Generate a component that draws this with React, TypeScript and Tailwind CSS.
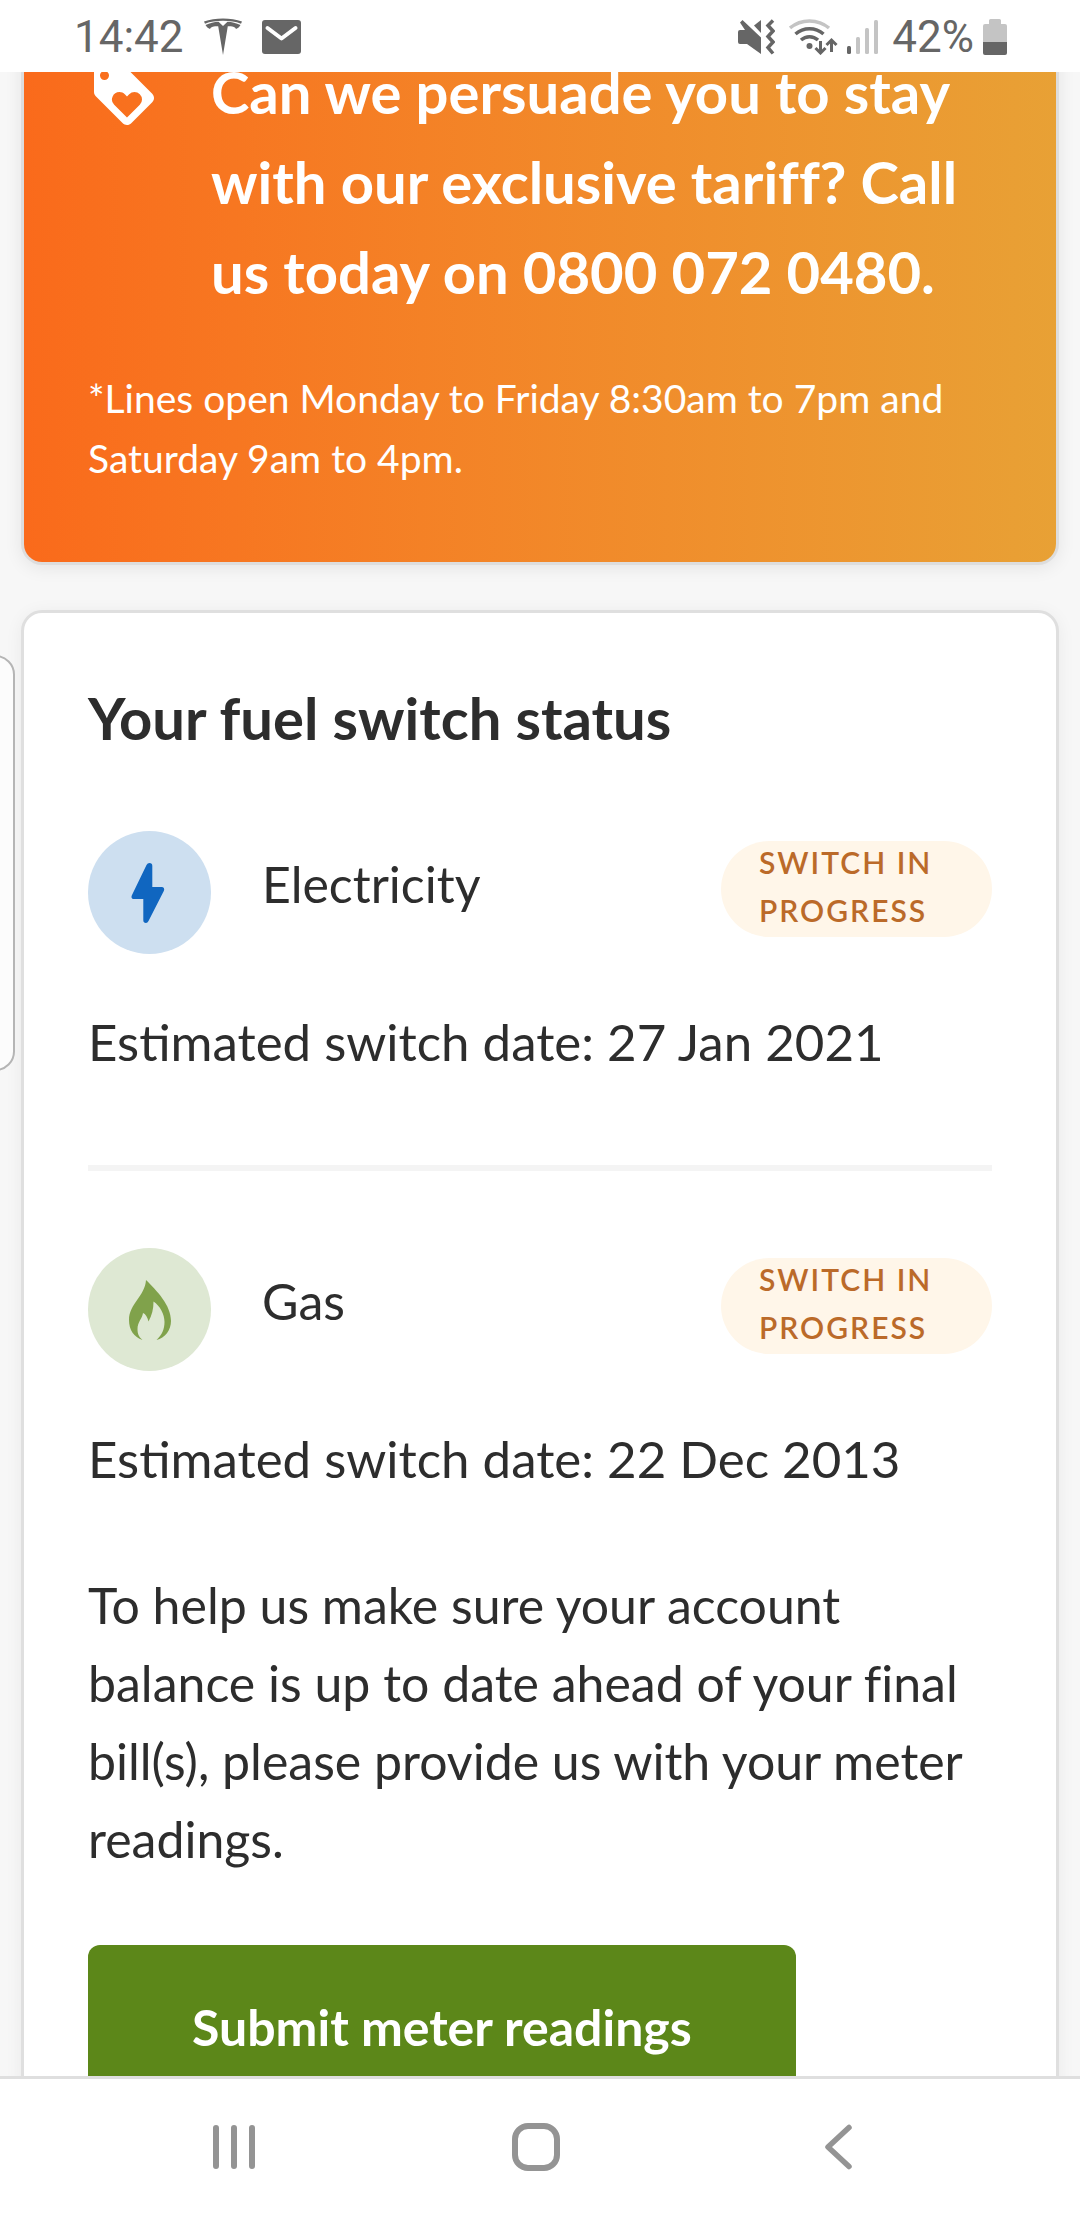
import { MdLoyalty } from 'react-icons/md';

const fuels = [
  { name: 'Electricity', date: '27 Jan 2021' },
  { name: 'Gas', date: '22 Dec 2013' },
];

function TeslaIcon() {
  return (
    <svg width="38" height="38" viewBox="0 0 38 38" fill="#666" aria-hidden="true">
      <path d="M0 3.5C11-.6 27-.6 38 3.5L37 5.700C27 1.900 11 1.900 1 5.700Z" />
      <path d="M1.500 7C6 4.800 10 4 14.500 3.700L19 8L23.500 3.700C28 4 32 4.800 36.500 7C35.500 9 34 10.200 32 11C31 8.800 28.500 8.300 23.800 8.300L19 37L14.200 8.300C9.500 8.300 7 8.800 6 11C4 10.200 2.500 9 1.500 7Z" />
    </svg>
  );
}

function MailIcon() {
  return (
    <svg width="39" height="34" viewBox="0 0 39 34" aria-hidden="true">
      <rect width="39" height="34" rx="3" fill="#666" />
      <path d="M5.500 8L19.500 18.500L33.500 8" fill="none" stroke="#fff" strokeWidth="4" strokeLinecap="round" strokeLinejoin="round" />
    </svg>
  );
}

function MuteIcon() {
  return (
    <svg width="37" height="36" viewBox="0 0 37 36" fill="#666" aria-hidden="true">
      <path d="M0 13Q0 11 2 11H7L2 3.500L4.500 1L23 18.500V35L9 25H2Q0 25 0 23Z" />
      <path d="M16 6.500L23 1V14Z" />
      <path d="M35 1.500L30 6.500L35 12L30 17.500L35 23L30 28.500L35 34.500" fill="none" stroke="#666" strokeWidth="3.500" />
    </svg>
  );
}

function WifiIcon() {
  return (
    <svg width="49" height="36" viewBox="0 0 49 36" fill="none" strokeWidth="3.500" aria-hidden="true">
      <path d="M1 9C12-.5 29-.5 40 9" stroke="#c4c4c4" />
      <path d="M6.500 15C14.500 8 26.500 8 34.500 15" stroke="#666" />
      <path d="M12 21C17 16.500 24 16.500 29 21" stroke="#666" />
      <circle cx="20.500" cy="27" r="3" fill="#666" />
      <path d="M31.500 22V33M26.500 29L31.500 34L36.500 29M42.500 33V21M37.500 26L42.500 21L47.500 26" stroke="#666" strokeWidth="3" />
    </svg>
  );
}

function SignalIcon() {
  return (
    <svg width="31" height="34" viewBox="0 0 31 34" fill="#c4c4c4" aria-hidden="true">
      <rect y="26" width="4" height="8" rx="1.500" fill="#666" />
      <rect x="9" y="17" width="4" height="17" rx="1.500" />
      <rect x="18" y="8" width="4" height="26" rx="1.500" />
      <rect x="27" width="4" height="34" rx="1.500" />
    </svg>
  );
}

function BatteryIcon() {
  return (
    <svg width="24" height="36" viewBox="0 0 24 36" aria-hidden="true">
      <path d="M6 5V1.500Q6 0 7.500 0H16.500Q18 0 18 1.500V5H22Q24 5 24 7V23H0V7Q0 5 2 5Z" fill="#c4c4c4" />
      <path d="M0 23H24V34Q24 36 22 36H2Q0 36 0 34Z" fill="#666" />
    </svg>
  );
}

function BoltIcon() {
  return (
    <svg width="38" height="60" viewBox="0 0 38 60" fill="#1066c0" aria-hidden="true">
      <path d="M18.500 0C20.300 0 21.300 1 21.300 2.800V24H30.500C33 24 33.800 26 32.800 28L17.500 58Q16.500 60 15 60C13.300 60 12.300 59 12.300 57.300V36H3C.5 36 0 34 1 32L15.500 2Q16.500 0 18.500 0Z" />
    </svg>
  );
}

function FlameIcon() {
  return (
    <svg width="42" height="60" viewBox="0 0 42 60" fill="#80a24b" aria-hidden="true">
      <path d="M17 0C28 11 42 25 42 41C42 50 36 58 27.500 60C33 55 35.500 49 35.500 42C35.500 34 31 26 24.500 21.500C24.500 29 23 35 19.500 41.500C18.500 37 16.500 34 14 33C13.500 38 8.500 42 8.500 49C8.500 54 10 57 13.500 60C5 57 0 50 0 40C0 24 16 16 17 0Z" />
    </svg>
  );
}

export default function App() {
  return (
    <div className="flex h-screen flex-col overflow-hidden bg-[#f7f7f7] font-['Lato',sans-serif] text-[#2d2d2d]">
      <header className="flex h-[72px] shrink-0 items-center justify-between bg-white pl-[74px] pr-[73px] pt-0.5 font-['Roboto',sans-serif] text-[44px] leading-none text-[#666]">
        <div className="flex items-center gap-5">
          <span>14:42</span>
          <TeslaIcon />
          <MailIcon />
        </div>
        <div className="flex items-center gap-[9px]">
          <div className="flex items-center gap-3.5">
            <MuteIcon />
            <WifiIcon />
          </div>
          <div className="flex items-center gap-3.5">
            <SignalIcon />
            <span>42%</span>
          </div>
          <BatteryIcon />
        </div>
      </header>

      <main className="relative min-h-0 flex-1 overflow-hidden">
        {/* edge of the neighbouring carousel card */}
        <div className="absolute -left-6 top-[583px] h-[416px] w-[39px] rounded-[20px] border-2 border-[#b5b5b5] bg-[#fcfcfc]" />

        {/* page is scrolled part way down, so the first card starts above the fold */}
        <div className="-mt-[94px] flex flex-col gap-[45px] px-[21px]">
          <section className="rounded-[21px] border-[3px] border-black/10 bg-linear-to-r from-[#fa6a1b] to-[#e8a135] bg-origin-border bg-clip-padding px-16 pb-[74px] pt-[66px] text-white shadow-[0_3px_18px_rgba(0,0,0,0.08)]">
            <div className="flex gap-[51px]">
              <MdLoyalty className="mt-3 size-[72px] shrink-0" />
              <h2 className="text-[58px] font-bold leading-[90px] [font-variant-ligatures:no-common-ligatures]">
                Can we persuade you to stay with our exclusive tariff? Call us today on 0800 072 0480.
              </h2>
            </div>
            <p className="mt-[51px] text-[39px] leading-[60px]">
              *Lines open Monday to Friday 8:30am to 7pm and Saturday 9am to 4pm.
            </p>
          </section>

          <section className="rounded-[21px] border-[3px] border-[#dfdfdf] bg-white px-16 pb-16 pt-16 text-[50px] leading-[78px] shadow-[0_3px_18px_rgba(0,0,0,0.06)]">
            <h2 className="text-[58px] font-bold leading-[82px]">Your fuel switch status</h2>

            <ul>
              {fuels.map((fuel, i) => (
                <li key={fuel.name} className={i > 0 ? 'mt-[84px] border-t-[6px] border-[#f4f4f4] pt-[77px]' : 'pt-[72px]'}>
                  <div className="flex items-start justify-between">
                    <div className="flex items-start gap-[51px]">
                      <div
                        className={
                          i === 0
                            ? 'flex size-[123px] items-center justify-center rounded-full bg-[#cddff0]'
                            : 'flex size-[123px] items-center justify-center rounded-full bg-[#dee8d3]'
                        }
                      >
                        {i === 0 ? <BoltIcon /> : <FlameIcon />}
                      </div>
                      <h3 className="mt-[14px]">{fuel.name}</h3>
                    </div>
                    <span className="mt-[10px] flex h-24 w-[271px] items-center rounded-full bg-[#fff6e9] px-[38px] pb-1.5 text-[30px] font-semibold uppercase leading-[48px] tracking-[2px] text-[#bb6a29]">
                      Switch in progress
                    </span>
                  </div>
                  <p className="mt-[49px] text-[51px]">Estimated switch date: {fuel.date}</p>
                </li>
              ))}
            </ul>

            <p className="mt-[68px] [font-variant-ligatures:no-common-ligatures]">
              To help us make sure your account balance is up to date ahead of your final bill(s), please provide us
              with your meter readings.
            </p>

            <button type="button" className="mt-[67px] rounded-xl bg-[#5c8719] px-[104px] py-[43px] font-bold text-white">
              Submit meter readings
            </button>
          </section>
        </div>
      </main>

      <nav className="flex h-36 shrink-0 items-center justify-between border-t-[3px] border-[#dfdfdf] bg-white pb-1.5 pl-[210px] pr-[218px]">
        <button type="button" aria-label="Recent apps">
          <svg width="48" height="48" viewBox="0 0 48 48" stroke="#949494" strokeWidth="6" strokeLinecap="round">
            <path d="M6 5V43M24 5V43M42 5V43" />
          </svg>
        </button>
        <button type="button" aria-label="Home">
          <svg width="48" height="48" viewBox="0 0 48 48" fill="none" stroke="#949494" strokeWidth="6">
            <rect x="3" y="3" width="42" height="42" rx="13" />
          </svg>
        </button>
        <button type="button" aria-label="Back">
          <svg width="48" height="48" viewBox="0 0 48 48" fill="none" stroke="#949494" strokeWidth="5.500" strokeLinecap="round" strokeLinejoin="round">
            <path d="M35 4.500L14 24L35 43.500" />
          </svg>
        </button>
      </nav>
    </div>
  );
}
